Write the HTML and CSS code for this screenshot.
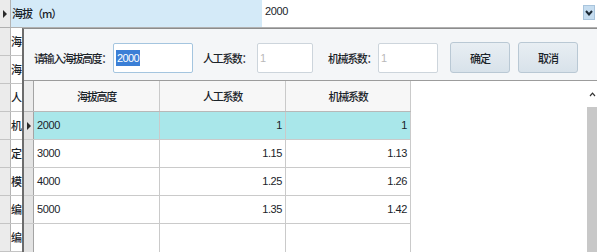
FILE: index.html
```html
<!DOCTYPE html>
<html lang="zh">
<head>
    <meta charset="UTF-8">
    <title>海拔系数</title>
    <link rel="stylesheet" href="styles.css">
</head>
<body>
    <div class="top-row">
        <div class="row-head"><span class="tri"></span></div>
        <div class="name-cell">海拔（m）</div>
        <div class="value-cell">2000</div>
        <div class="drop-btn">
            <svg width="8" height="6" viewBox="0 0 8 6"><path d="M1 1 L4 4.5 L7 1" fill="none" stroke="#1c2a36" stroke-width="2"/></svg>
        </div>
    </div>

    <div class="lower">
        <!-- rows of the list behind the popup -->
        <div class="side">
            <div class="side-row"><div class="row-head"></div><div class="side-cell">海</div></div>
            <div class="side-row"><div class="row-head"></div><div class="side-cell">海</div></div>
            <div class="side-row"><div class="row-head"></div><div class="side-cell">人</div></div>
            <div class="side-row"><div class="row-head"></div><div class="side-cell">机</div></div>
            <div class="side-row"><div class="row-head"></div><div class="side-cell">定</div></div>
            <div class="side-row"><div class="row-head"></div><div class="side-cell">模</div></div>
            <div class="side-row"><div class="row-head"></div><div class="side-cell">编</div></div>
            <div class="side-row"><div class="row-head"></div><div class="side-cell">编</div></div>
        </div>

        <div class="popup">
            <div class="toolbar">
                <label class="label label-height">请输入海拔高度：</label>
                <div class="input input-height"><span class="selected-text">2000</span></div>
                <label class="label label-man">人工系数：</label>
                <div class="input input-man disabled">1</div>
                <label class="label label-mach">机械系数：</label>
                <div class="input input-mach disabled">1</div>
                <button class="btn btn-ok">确定</button>
                <button class="btn">取消</button>
            </div>

            <div class="grid">
                <div class="table">
                    <div class="tr th">
                        <div class="rh"></div>
                        <div class="cell">海拔高度</div>
                        <div class="cell">人工系数</div>
                        <div class="cell last">机械系数</div>
                    </div>
                    <div class="tr current">
                        <div class="rh"><span class="tri"></span></div>
                        <div class="cell">2000</div>
                        <div class="cell num">1</div>
                        <div class="cell num last">1</div>
                    </div>
                    <div class="tr">
                        <div class="rh"></div>
                        <div class="cell">3000</div>
                        <div class="cell num">1.15</div>
                        <div class="cell num last">1.13</div>
                    </div>
                    <div class="tr">
                        <div class="rh"></div>
                        <div class="cell">4000</div>
                        <div class="cell num">1.25</div>
                        <div class="cell num last">1.26</div>
                    </div>
                    <div class="tr">
                        <div class="rh"></div>
                        <div class="cell">5000</div>
                        <div class="cell num">1.35</div>
                        <div class="cell num last">1.42</div>
                    </div>
                    <div class="tr empty">
                        <div class="rh"></div>
                        <div class="cell"></div>
                        <div class="cell"></div>
                        <div class="cell last"></div>
                    </div>
                </div>
                <div class="grid-blank"></div>
                <div class="scrollbar">
                    <div class="scroll-up">
                        <svg width="7" height="5" viewBox="0 0 7 5"><path d="M1 4 L3.5 1.2 L6 4" fill="none" stroke="#333" stroke-width="1.2"/></svg>
                    </div>
                    <div class="scroll-track"></div>
                </div>
            </div>
        </div>
    </div>
</body>
</html>
```

FILE: styles.css
```css
/* General */
body {
    margin: 0;
    width: 597px;
    height: 252px;
    overflow: hidden;
    background-color: #ffffff;
    color: #1a2329;
    font-family: 'Liberation Sans', 'Noto Sans CJK SC', sans-serif;
    font-size: 11px;
}

.tri {
    display: inline-block;
    width: 0;
    height: 0;
    border-left: 4px solid #2a2a2a;
    border-top: 4px solid transparent;
    border-bottom: 4px solid transparent;
}

.row-head {
    width: 10px;
    flex: none;
    background-color: #ebebeb;
    border-right: 1px solid #b4b4b4;
    display: flex;
    align-items: center;
    justify-content: center;
}

/* Top record row */
.top-row {
    display: flex;
    height: 27px;
    border-bottom: 1px solid #b0b0b0;
}

.name-cell {
    width: 250px;
    padding-left: 1px;
    padding-top: 6px;
    background-color: #d4eaf8;
    font-family: 'Noto Sans CJK SC', sans-serif;
    font-weight: 500;
    font-size: 11px;
    letter-spacing: -1px;
    line-height: 14px;
}

.value-cell {
    flex: 1;
    padding-left: 3px;
    padding-top: 5px;
    line-height: 13px;
    letter-spacing: -0.4px;
}

.drop-btn {
    width: 12px;
    height: 15px;
    margin: 5px 2px 0 0;
    background-color: #c6ddf0;
    border: 1px solid #a8c4dc;
    box-sizing: border-box;
    display: flex;
    align-items: center;
    justify-content: center;
}

/* Lower part */
.lower {
    display: flex;
    height: 224px;
}

.side {
    width: 22px;
    flex: none;
    overflow: hidden;
}

.side-row {
    display: flex;
    height: 27px;
    border-bottom: 1px solid #c4c4c4;
}

.side-cell {
    width: 11px;
    font-family: 'Noto Sans CJK SC', sans-serif;
    font-weight: 500;
    font-size: 11px;
    line-height: 27px;
    white-space: nowrap;
}

/* Popup */
.popup {
    flex: 1;
    display: flex;
    flex-direction: column;
    background-color: #f4f6f8;
    border-left: 2px solid #6c6c6c;
    border-top: 1px solid #8c8c8c;
    min-width: 0;
}

.toolbar {
    height: 51px;
    flex: none;
    display: flex;
    align-items: flex-start;
    padding: 14px 0 0 10px;
    box-sizing: border-box;
}

.label {
    height: 30px;
    line-height: 30px;
    font-family: 'Noto Sans CJK SC', sans-serif;
    font-weight: 500;
    font-size: 11px;
    letter-spacing: -1.4px;
    white-space: nowrap;
    flex: none;
}

.label-height { width: 79px; }
.label-man { width: 54px; margin-left: 10px; }
.label-mach { width: 50px; margin-left: 15px; }

.input {
    height: 30px;
    box-sizing: border-box;
    background-color: #ffffff;
    border: 1px solid #a4c5df;
    border-radius: 2px;
    padding: 6px 0 0 2px;
    line-height: 16px;
    flex: none;
}

.input-height { width: 80px; }
.input-man { width: 56px; }
.input-mach { width: 60px; }

.input.disabled {
    border-color: #cdd5dc;
    color: #b9b9b9;
}

.selected-text {
    display: inline-block;
    background-color: #3b7fd6;
    color: #ffffff;
    letter-spacing: -0.6px;
    padding: 0 1px;
}

.btn {
    width: 60px;
    height: 31px;
    margin-top: -1px;
    margin-left: 8px;
    background: linear-gradient(#e8eef3, #d8e2ea);
    border: 1px solid #b9c8d4;
    border-radius: 3px;
    color: #1a2329;
    font-family: 'Noto Sans CJK SC', sans-serif;
    font-weight: 500;
    font-size: 11px;
    letter-spacing: -1px;
    padding: 0;
}

.btn-ok { margin-left: 12px; }

/* Grid */
.grid {
    flex: 1;
    display: flex;
    border-top: 1px solid #9c9c9c;
    overflow: hidden;
    background-color: #ffffff;
}

.table {
    flex: none;
}

.tr {
    display: flex;
    height: 27px;
    border-bottom: 1px solid #cacaca;
}

.tr .rh {
    width: 9px;
    background-color: #e3e3e3;
    border-right: 1px solid #a4a4a4;
    display: flex;
    align-items: center;
    justify-content: center;
}

.cell {
    width: 126px;
    border-right: 1px solid #cacaca;
    padding: 0 3px;
    box-sizing: border-box;
    line-height: 27px;
    letter-spacing: -0.4px;
    white-space: nowrap;
}

.cell.last {
    width: 125px;
}

.cell.num {
    text-align: right;
}

.th {
    height: 30px;
    background-color: #f7f7f7;
    border-bottom-color: #b8b8b8;
}

.th .cell {
    line-height: 30px;
    text-align: center;
    font-family: 'Noto Sans CJK SC', sans-serif;
    font-weight: 500;
    letter-spacing: -1.2px;
}

.th .rh {
    background-color: #ececec;
}

.tr.current .cell {
    background-color: #a9e7ea;
}

.tr.empty {
    height: 40px;
}

.grid-blank {
    flex: 1;
}

.scrollbar {
    width: 10px;
    flex: none;
    display: flex;
    flex-direction: column;
}

.scroll-up {
    height: 26px;
    display: flex;
    justify-content: center;
    padding-top: 11px;
    box-sizing: border-box;
}

.scroll-track {
    flex: 1;
    background-color: #c8c8c8;
}
```
